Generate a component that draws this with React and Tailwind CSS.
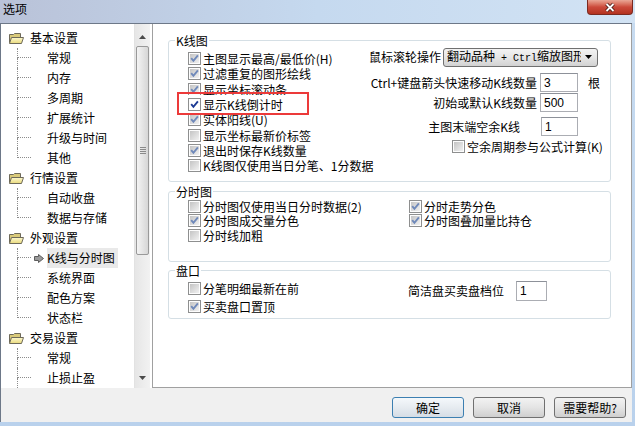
import React from "react";

const tree = [
  { label: "基本设置", items: ["常规", "内存", "多周期", "扩展统计", "升级与时间", "其他"] },
  { label: "行情设置", items: ["自动收盘", "数据与存储"] },
  { label: "外观设置", items: ["K线与分时图", "系统界面", "配色方案", "状态栏"] },
  { label: "交易设置", items: ["常规", "止损止盈"] },
];

const klineRows = [
  { text: "主图显示最高/最低价(H)", on: true },
  { text: "过滤重复的图形绘线", on: true },
  { text: "显示坐标滚动条", on: true },
  { text: "显示K线倒计时", on: true, focus: true },
  { text: "实体阳线(U)", on: true },
  { text: "显示坐标最新价标签", on: false },
  { text: "退出时保存K线数量", on: true },
  { text: "K线图仅使用当日分笔、1分数据", on: false },
];

function Defs() {
  return (
    <svg width="0" height="0" className="absolute">
      <defs>
        <linearGradient id="cbfill" x1="0" y1="0" x2="1" y2="1">
          <stop offset="0" stopColor="#c4c4c4" />
          <stop offset="1" stopColor="#f1f1f1" />
        </linearGradient>
        <linearGradient id="folder" x1="0" y1="0" x2="0" y2="1">
          <stop offset="0" stopColor="#fdf8cf" />
          <stop offset="1" stopColor="#e9da7c" />
        </linearGradient>
      </defs>
    </svg>
  );
}

function Check({ on, focus }) {
  return (
    <svg width="13" height="13" viewBox="0 0 13 13" className="shrink-0">
      <rect x="0.5" y="0.5" width="12" height="12" fill="#fdfdfd" stroke="#8e8f8f" />
      <rect x="2" y="2" width="9" height="9" fill={focus ? "#ffffff" : "url(#cbfill)"} />
      {on && (
        <path
          d="M3.2 6.2 L5.4 8.8 L9.9 3.4"
          fill="none"
          stroke={focus ? "#1c3a94" : "#6f89ba"}
          strokeWidth="1.9"
        />
      )}
    </svg>
  );
}

function CheckRow({ on, focus, text, className }) {
  return (
    <div className={`flex items-center whitespace-nowrap ${className}`}>
      <Check on={on} focus={focus} />
      <span className="ml-[2px] leading-[13px]">{text}</span>
    </div>
  );
}

function Folder() {
  return (
    <svg width="15" height="11" viewBox="0 0 15 11" className="ml-[8px] shrink-0">
      <path d="M0.5 1.5 H4.5 L5.5 0.5 H11.5 V9.5 H0.5 Z" fill="#d9ca7a" stroke="#6e6a5a" />
      <path d="M2.5 4.5 H14.5 L12.5 10.5 H0.5 Z" fill="url(#folder)" stroke="#6e6a5a" />
    </svg>
  );
}

function Pointer() {
  return (
    <svg width="10" height="9" viewBox="0 0 10 9">
      <path d="M0.5 2.5 H4.5 V0.5 L9.5 4.5 L4.5 8.5 V6.5 H0.5 Z" fill="#9a9a9a" stroke="#5c5c5c" />
    </svg>
  );
}

function Tree() {
  return (
    <div className="flex w-[151px] bg-white pr-[1px]">
      <div className="w-[133px] overflow-hidden pt-[4px]">
        {tree.map((g) => (
          <div key={g.label}>
            <div className="flex h-[20px] items-center">
              <Folder />
              <span className="ml-[6px] leading-[14px]">{g.label}</span>
            </div>
            {g.items.map((item, i) => {
              const last = i === g.items.length - 1 && g.label !== "交易设置";
              const selected = item === "K线与分时图";
              return (
                <div key={item + i} className="flex h-[20px]">
                  <div className="ml-[16px] flex w-[14px] flex-col">
                    <div className="h-[10px] border-b border-l border-dotted border-[#8c8c8c]" />
                    <div className={last ? "flex-1" : "flex-1 border-l border-dotted border-[#8c8c8c]"} />
                  </div>
                  <div className="flex w-[16px] items-center justify-center">{selected && <Pointer />}</div>
                  <div className="flex items-center">
                    <span className={selected ? "bg-[#e9e9e9] pr-[3px] leading-[20px]" : "leading-[14px]"}>{item}</span>
                  </div>
                </div>
              );
            })}
          </div>
        ))}
        <div className="flex h-[20px]">
          <div className="ml-[16px] w-[14px] border-l border-dotted border-[#8c8c8c]" />
        </div>
      </div>
      <div className="flex w-[16px] flex-col border-l border-[#e2e2e2] bg-linear-to-r from-[#e6e6e6] to-[#f2f2f2]">
        <div className="flex h-[22px] items-center justify-center pt-[3px]">
          <svg width="7" height="4" viewBox="0 0 7 4">
            <path d="M0 4 L3.5 0 L7 4 Z" fill="#4a4a4a" />
          </svg>
        </div>
        <div className="mx-[1px] flex h-[209px] flex-col items-center justify-center gap-[1px] rounded-[2px] border border-[#999999] bg-linear-to-r from-[#f4f4f4] to-[#d6d6d6]">
          <div className="h-px w-[6px] bg-[#8a8a8a]" />
          <div className="h-px w-[6px] bg-[#8a8a8a]" />
          <div className="h-px w-[6px] bg-[#8a8a8a]" />
          <div className="h-px w-[6px] bg-[#8a8a8a]" />
        </div>
        <div className="flex-1" />
        <div className="flex h-[20px] items-center justify-center">
          <svg width="7" height="4" viewBox="0 0 7 4">
            <path d="M0 0 L7 0 L3.5 4 Z" fill="#4a4a4a" />
          </svg>
        </div>
      </div>
    </div>
  );
}

function Field({ value, className }) {
  return (
    <div
      className={`flex items-center border border-[#abadb3] border-t-[#8d9199] bg-white pl-[3px] font-['Liberation_Sans',sans-serif] text-[12px] ${className}`}
    >
      {value}
    </div>
  );
}

function Button({ label, primary }) {
  return (
    <div
      className={
        primary
          ? "flex h-[21px] w-[72px] items-center justify-center rounded-[3px] border border-[#3c7fb1] bg-linear-to-b from-[#f4f8fb] via-[#e6ebf0] to-[#d5dde5] leading-[14px]"
          : "flex h-[21px] w-[72px] items-center justify-center rounded-[3px] border border-[#707070] bg-linear-to-b from-[#f2f2f2] via-[#e4e4e4] to-[#cfcfcf] leading-[14px]"
      }
    >
      {label}
    </div>
  );
}

function Panel() {
  return (
    <div className="flex w-[480px] flex-col border-x border-b border-[#a0a0a0] bg-white pl-[15px] pt-[10px]">
      <fieldset className="h-[148px] w-[443px] rounded-[3px] border border-[#d5dfe5]">
        <legend className="ml-[6px] px-[1px] leading-[13px]">K线图</legend>
        <div className="flex">
          <div className="w-[200px] shrink-0 pl-[19px] pt-[4px]">
            {klineRows.map((r, i) =>
              r.focus ? (
                <div key={i} className="relative -my-[2px] flex h-[19.3px] items-center bg-white">
                  <Check on focus />
                  <span className="ml-[2px] whitespace-nowrap leading-[13px]">{r.text}</span>
                  <div className="absolute left-[-11px] top-[-2.5px] h-[23px] w-[132px] border-2 border-[#ec3a3a]" />
                </div>
              ) : (
                <CheckRow key={i} on={r.on} text={r.text} className="h-[15.3px]" />
              )
            )}
          </div>
          <div className="flex flex-col whitespace-nowrap">
            <div className="flex h-[20px] items-center">
              <span className="leading-[14px]">鼠标滚轮操作</span>
              <div className="ml-[2px] flex h-[19px] w-[155px] items-center rounded-[3px] border border-[#707070] bg-linear-to-b from-[#f3f3f3] via-[#e6e6e6] to-[#d2d2d2]">
                <span className="w-[137px] overflow-hidden whitespace-nowrap pl-[3px] leading-[14px]">
                  翻动品种<span className="font-['Liberation_Mono',monospace] text-[10px]"> + Ctrl</span>缩放图形
                </span>
                <svg width="7" height="4" viewBox="0 0 7 4" className="ml-[4px]">
                  <path d="M0 0 L7 0 L3.5 4 Z" fill="#000" />
                </svg>
              </div>
            </div>
            <div className="mt-[6px] flex h-[19px] items-center">
              <span className="w-[168px] text-right leading-[14px]">Ctrl+键盘箭头快速移动K线数量</span>
              <Field value="3" className="ml-[3px] h-[19px] w-[38px]" />
              <span className="ml-[10px] leading-[14px]">根</span>
            </div>
            <div className="mt-[1px] flex h-[19px] items-center">
              <span className="w-[168px] text-right leading-[14px]">初始或默认K线数量</span>
              <Field value="500" className="ml-[3px] h-[19px] w-[38px]" />
            </div>
            <div className="mt-[5px] flex h-[19px] items-center">
              <span className="w-[151px] text-right leading-[14px]">主图末端空余K线</span>
              <Field value="1" className="ml-[21px] h-[19px] w-[37px]" />
            </div>
            <CheckRow text="空余周期参与公式计算(K)" className="mt-[4px] h-[13px] pl-[83px]" />
          </div>
        </div>
      </fieldset>

      <fieldset className="mt-[3px] h-[77px] w-[443px] rounded-[3px] border border-[#d5dfe5]">
        <legend className="ml-[6px] px-[1px] leading-[13px]">分时图</legend>
        <div className="flex pl-[19px] pt-[1px]">
          <div className="w-[221px] shrink-0">
            <CheckRow text="分时图仅使用当日分时数据(2)" className="h-[14.5px]" />
            <CheckRow on text="分时图成交量分色" className="h-[14.5px]" />
            <CheckRow text="分时线加粗" className="h-[14.5px]" />
          </div>
          <div>
            <CheckRow on text="分时走势分色" className="h-[14.5px]" />
            <CheckRow on text="分时图叠加量比持仓" className="h-[14.5px]" />
          </div>
        </div>
      </fieldset>

      <fieldset className="mt-[2px] h-[55px] w-[443px] rounded-[3px] border border-[#d5dfe5]">
        <legend className="ml-[6px] px-[1px] leading-[13px]">盘口</legend>
        <div className="flex pl-[19px] pt-[2px]">
          <div className="w-[220px] shrink-0">
            <CheckRow text="分笔明细最新在前" className="h-[18.5px]" />
            <CheckRow on text="买卖盘口置顶" className="h-[18.5px]" />
          </div>
          <div className="mt-[1px] flex h-[22px] items-center whitespace-nowrap">
            <span className="leading-[14px]">简洁盘买卖盘档位</span>
            <Field value="1" className="ml-[12px] h-[20px] w-[31px]" />
          </div>
        </div>
      </fieldset>
    </div>
  );
}

export default function App() {
  return (
    <div className="flex h-[426px] w-[635px] flex-col overflow-hidden bg-linear-to-b from-[#c8dcf1] to-[#b9d1ec] font-['Noto_Sans_CJK_SC','Noto_Sans',sans-serif] text-[12px] text-black">
      <Defs />
      <div className="flex h-[23px] shrink-0 items-start bg-linear-to-r from-[#b9c2d8] via-[#c5d9ef] to-[#d2e3f4]">
        <span className="ml-[3px] mt-[2px] text-[12px] leading-[14px]">选项</span>
        <div className="ml-auto mr-[2px] flex h-[15px] w-[46px] items-center justify-center rounded-b-[4px] border border-t-0 border-[#7b2a20] bg-linear-to-b from-[#e9a796] via-[#cc4a3b] to-[#b3321f]">
          <svg width="14" height="11" viewBox="0 0 14 11">
            <path d="M3.5 2 L10.5 9 M10.5 2 L3.5 9" stroke="#4a1a14" strokeWidth="3.6" />
            <path d="M3.5 2 L10.5 9 M10.5 2 L3.5 9" stroke="#ffffff" strokeWidth="1.8" />
          </svg>
        </div>
      </div>
      <div className="mb-[4px] mr-[3px] flex flex-1 flex-col border-l border-t border-[#6d7888] bg-[#f0f0f0]">
        <div className="flex h-[364px]">
          <Tree />
          <Panel />
        </div>
        <div className="flex flex-1 items-start justify-end gap-[9px] pr-[6px] pt-[9px]">
          <Button label="确定" primary />
          <Button label="取消" />
          <Button label="需要帮助?" />
        </div>
      </div>
    </div>
  );
}
